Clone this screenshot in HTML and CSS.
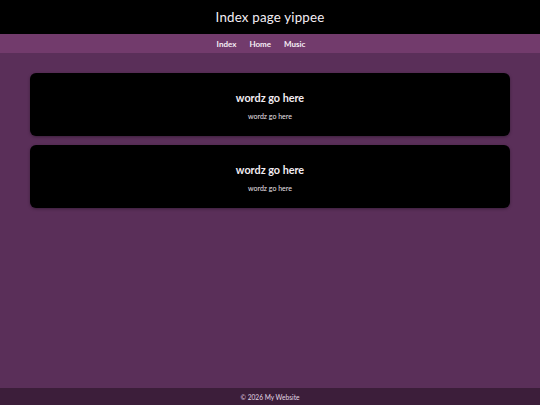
FILE: index.html
```html
<!DOCTYPE html>
<html>
<head>
<meta charset="utf-8">
<title>Index page yippee</title>
<link rel="stylesheet" href="styles.css">
</head>
<body>
<header class="site-header">
  <h1 class="site-title">Index page yippee</h1>
</header>
<nav class="site-nav">
  <a href="#">Index</a>
  <a href="#">Home</a>
  <a href="#">Music</a>
</nav>
<main class="content">
  <section class="card">
    <h2 class="card-title">wordz go here</h2>
    <p class="card-text">wordz go here</p>
  </section>
  <section class="card">
    <h2 class="card-title">wordz go here</h2>
    <p class="card-text">wordz go here</p>
  </section>
</main>
<footer class="site-footer">© 2026 My Website</footer>
</body>
</html>
```

FILE: styles.css
```css
html, body {
  margin: 0;
  padding: 0;
}
body {
  min-height: 100vh;
  display: flex;
  flex-direction: column;
  background: #5a2f59;
  color: #f2e9f2;
  font-family: "Lato", "Open Sans", sans-serif;
}
.site-header {
  background: #000;
  height: 34px;
  display: flex;
  align-items: center;
  justify-content: center;
}
.site-title {
  margin: 0;
  font-size: 13.3px;
  font-weight: 400;
  color: #f4eef4;
  letter-spacing: 0.2px;
}
.site-nav {
  background: #723b6c;
  height: 19px;
  display: flex;
  align-items: center;
  justify-content: center;
  gap: 13px;
  padding-right: 18px;
}
.site-nav a {
  color: #f6eef6;
  text-decoration: none;
  font-size: 8px;
  font-weight: 700;
}
.content {
  flex: 1;
  padding: 20px 30px;
  display: flex;
  flex-direction: column;
  gap: 9px;
}
.card {
  background: #000;
  border-radius: 6px;
  padding: 19px 16px 16px;
  text-align: center;
  box-shadow: 0 1px 3px rgba(0,0,0,0.35);
}
.card-title {
  margin: 0 0 9px;
  font-size: 10.8px;
  line-height: 12px;
  font-weight: 700;
  color: #f2ecf2;
}
.card-text {
  margin: 0;
  font-size: 7px;
  line-height: 7px;
  color: #e8e0e8;
}
.site-footer {
  background: #3c1e3a;
  height: 17px;
  display: flex;
  align-items: center;
  justify-content: center;
  font-size: 6.6px;
  color: #e3d6e3;
}
```
